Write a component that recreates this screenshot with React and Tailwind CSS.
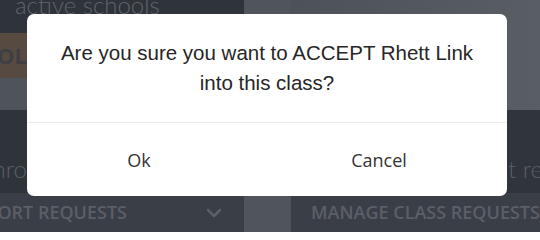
import { ChevronDown } from 'lucide-react';

export default function App() {
  return (
    <div className="relative w-[540px] h-[232px] overflow-hidden bg-[#2f333a]">
      {/* Dimmed page behind the modal */}
      <div className="flex h-full">
        {/* Left column */}
        <div className="w-[244px] shrink-0 flex flex-col">
          <div className="h-[33px] overflow-hidden bg-[#2f333a] pl-[15px]">
            <div className="-mt-[10px] text-[24px] font-light leading-[30px] text-[#5f646b] font-['Lato',sans-serif] whitespace-nowrap">
              active schools
            </div>
          </div>
          <div className="h-[45px] bg-[#574a40] flex items-center">
            <div className="w-[27px] overflow-hidden flex justify-end">
              <span className="text-[22px] font-bold text-[#3e3e44] font-['Open_Sans',sans-serif] whitespace-nowrap">
                SCHOOL
              </span>
            </div>
          </div>
          <div className="h-[32px] bg-[#4f545b]" />
          <div className="h-[83px] bg-[#2f333a] flex items-end pb-[9px]">
            <div className="w-[27px] overflow-hidden flex justify-end">
              <span className="text-[24px] font-light leading-[30px] text-[#5a5f66] font-['Lato',sans-serif] whitespace-nowrap">
                Enro
              </span>
            </div>
          </div>
          <div className="flex-1 bg-[#3a3e46] flex items-center justify-between pr-[18px]">
            <span className="-ml-[48px] text-[18px] font-semibold uppercase text-[#5b5f67] font-['Open_Sans',sans-serif] whitespace-nowrap">
              Support Requests
            </span>
            <ChevronDown className="w-[24px] h-[24px] text-[#5b5f67]" strokeWidth={2.5} />
          </div>
        </div>

        {/* Gap column */}
        <div className="w-[47px] shrink-0 bg-[#50555c]" />

        {/* Right column */}
        <div className="flex-1 flex flex-col min-w-0">
          <div className="h-[110px] bg-gradient-to-r from-[#4d5158] to-[#595d64]" />
          <div className="h-[83px] bg-[#30343b] flex items-end pb-[9px] pl-[217px]">
            <span className="text-[24px] font-light leading-[30px] text-[#5a5f66] font-['Lato',sans-serif] whitespace-nowrap">
              t requests
            </span>
          </div>
          <div className="flex-1 bg-[#3a3e46] flex items-center pl-[20px] overflow-hidden">
            <span className="text-[18px] font-semibold uppercase text-[#5b5f67] font-['Open_Sans',sans-serif] whitespace-nowrap">
              Manage Class Requests
            </span>
          </div>
        </div>
      </div>

      {/* Confirm modal */}
      <div className="absolute left-[27px] top-[14px] w-[480px] h-[182px] bg-white rounded-[7px] flex flex-col">
        <div className="h-[108px] flex items-center justify-center px-4">
          <p className="text-center text-[20.5px] leading-[30px] text-[#262626] font-['Liberation_Sans',Arial,sans-serif]">
            Are you sure you want to ACCEPT Rhett Link
            <br />
            into this class?
          </p>
        </div>
        <div className="h-px bg-[#ebebeb]" />
        <div className="flex-1 flex items-center justify-around pt-[1px]">
          <button className="text-[18px] text-[#333] font-['Open_Sans',sans-serif]">Ok</button>
          <button className="text-[18px] text-[#333] font-['Open_Sans',sans-serif]">Cancel</button>
        </div>
      </div>
    </div>
  );
}
